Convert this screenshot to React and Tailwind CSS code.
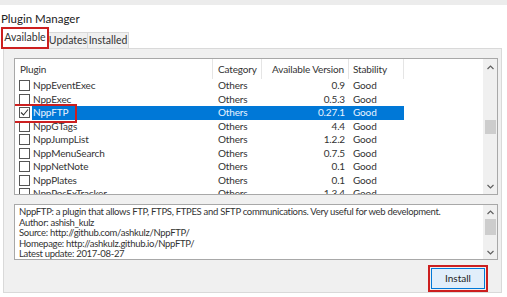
import React from "react";

const plugins = [
  { name: "NppEventExec", version: "0.9" },
  { name: "NppExec", version: "0.5.3" },
  { name: "NppFTP", version: "0.27.1", selected: true },
  { name: "NppGTags", version: "4.4" },
  { name: "NppJumpList", version: "1.2.2" },
  { name: "NppMenuSearch", version: "0.7.5" },
  { name: "NppNetNote", version: "0.1" },
  { name: "NppPlates", version: "0.1" },
  { name: "NppPosExTracker", version: "1.3.4" },
];

const Chevron = ({ up }) => (
  <svg width="7" height="5" viewBox="0 0 7 5" className="block">
    <polyline
      points={up ? "0.5,4 3.5,1 6.5,4" : "0.5,1 3.5,4 6.5,1"}
      fill="none"
      stroke="#606060"
      strokeWidth="1.2"
    />
  </svg>
);

const Checkbox = ({ checked }) => (
  <div className="w-[11px] h-[11px] border border-[#555] bg-white flex items-center justify-center shrink-0">
    {checked && (
      <svg width="9" height="9" viewBox="0 0 9 9">
        <polyline points="1,4.5 3.5,7 8,1.5" fill="none" stroke="#333" strokeWidth="1.1" />
      </svg>
    )}
  </div>
);

const App = () => {
  return (
    <div className="w-[507px] h-[297px] bg-white overflow-hidden text-[#333] font-['Lato',sans-serif] flex flex-col">
      <div className="h-[5px] bg-[#ececec]" />
      <div className="h-[22px] pl-[1px] pb-[2px] flex items-end text-[11.5px] leading-[13px] text-[#222]">Plugin Manager</div>

      {/* tabs */}
      <div className="h-[22px] flex items-end pl-[1px] text-[10.5px] relative z-10">
        <div className="h-[22px] w-[48px] shrink-0 border-2 border-[#cc1f1f] bg-white flex items-center justify-center">
          Available
        </div>
        <div className="h-[17px] w-[39px] shrink-0 border border-[#d9d9d9] border-l-0 bg-[#f0f0f0] flex items-center justify-center">
          Updates
        </div>
        <div className="h-[17px] w-[41px] shrink-0 border border-[#d9d9d9] border-l-0 bg-[#f0f0f0] flex items-center justify-center">
          Installed
        </div>
      </div>

      {/* panel */}
      <div className="-mt-[1px] ml-[3px] mr-[5px] h-[245px] border border-[#d9d9d9] bg-[#f0f0f0] pl-[10px] pt-[9px] flex flex-col">
        {/* plugin list */}
        <div className="relative w-[484px] h-[137px] border border-[#a8a8a8] bg-white flex overflow-hidden">
          <div className="flex-1 flex flex-col text-[10px] tracking-[-0.15px]">
            <div className="h-[20px] flex items-stretch shrink-0">
              <div className="w-[198px] pl-[5px] flex items-center border-r border-[#e5e5e5]">Plugin</div>
              <div className="w-[49px] pl-[5px] flex items-center border-r border-[#e5e5e5]">Category</div>
              <div className="w-[87px] pr-[4px] flex items-center justify-end border-r border-[#e5e5e5]">Available Version</div>
              <div className="w-[55px] pl-[4px] flex items-center border-r border-[#e5e5e5]">Stability</div>
            </div>
            {plugins.map((p) => (
              <div key={p.name} className="h-[13.5px] flex items-center shrink-0">
                <div className="w-[17px] pl-[4px] flex items-center">
                  <Checkbox checked={p.selected} />
                </div>
                <div
                  className={`flex items-center h-full ${
                    p.selected ? "bg-[#0078d7] text-[#eaf4ff]" : ""
                  }`}
                >
                  <div className="w-[181px] pl-[1px]">{p.name}</div>
                  <div className="w-[49px] pl-[5px]">Others</div>
                  <div className="w-[87px] pr-[4px] text-right">{p.version}</div>
                  <div className="w-[55px] pl-[4px]">Good</div>
                </div>
              </div>
            ))}
          </div>
          <div className="w-[14px] bg-[#f0f0f0] flex flex-col items-center">
            <div className="h-[16px] flex items-center">
              <Chevron up />
            </div>
            <div className="mt-[45px] w-[11px] h-[14px] bg-[#cdcdcd]" />
            <div className="flex-1" />
            <div className="h-[16px] flex items-center">
              <Chevron />
            </div>
          </div>
          <div className="absolute left-[-2px] top-[45px] w-[64px] h-[19px] border-2 border-[#cc1f1f]" />
        </div>

        {/* description */}
        <div className="mt-[9px] w-[484px] h-[56px] border border-[#a8a8a8] bg-white flex">
          <div className="flex-1 pl-[4px] pt-[2px] text-[9.5px] tracking-[-0.3px] leading-[10.5px] text-[#333] whitespace-nowrap">
            <div>NppFTP: a plugin that allows FTP, FTPS, FTPES and SFTP communications. Very useful for web development.</div>
            <div>Author: ashish_kulz</div>
            <div>Source: http://github.com/ashkulz/NppFTP/</div>
            <div>Homepage: http://ashkulz.github.io/NppFTP/</div>
            <div>Latest update: 2017-08-27</div>
          </div>
          <div className="w-[14px] bg-[#f0f0f0] flex flex-col items-center">
            <div className="h-[14px] flex items-center">
              <Chevron up />
            </div>
            <div className="w-[11px] h-[16px] bg-[#cdcdcd]" />
            <div className="flex-1" />
            <div className="h-[13px] flex items-center">
              <Chevron />
            </div>
          </div>
        </div>

        {/* install */}
        <div className="w-[484px] flex justify-end mt-[5px]">
          <div className="mr-[10px] w-[60px] h-[27px] border-2 border-[#cc1f1f] p-[1px]">
            <button className="w-full h-full bg-[#e1eefa] border border-[#0078d7] text-[10px] text-[#222] flex items-center justify-center">
              Install
            </button>
          </div>
        </div>
      </div>
    </div>
  );
};

export default App;
